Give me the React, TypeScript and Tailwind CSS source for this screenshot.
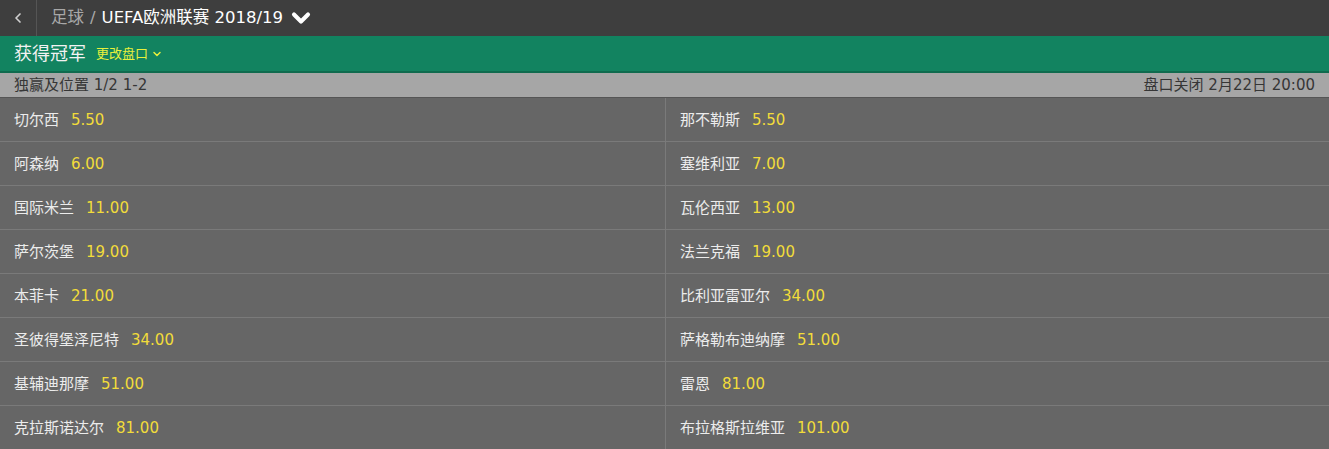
import { ChevronLeft, ChevronDown } from "lucide-react"

const rows: [string, string, string, string][] = [
  ["切尔西", "5.50", "那不勒斯", "5.50"],
  ["阿森纳", "6.00", "塞维利亚", "7.00"],
  ["国际米兰", "11.00", "瓦伦西亚", "13.00"],
  ["萨尔茨堡", "19.00", "法兰克福", "19.00"],
  ["本菲卡", "21.00", "比利亚雷亚尔", "34.00"],
  ["圣彼得堡泽尼特", "34.00", "萨格勒布迪纳摩", "51.00"],
  ["基辅迪那摩", "51.00", "雷恩", "81.00"],
  ["克拉斯诺达尔", "81.00", "布拉格斯拉维亚", "101.00"],
]

function Cell({ name, odds, right }: { name: string; odds: string; right?: boolean }) {
  return (
    <div
      className={
        "flex items-center gap-[12px] h-[44px] pl-[14px] pt-[2px] border-b border-[#7a7a7a] " +
        (right ? "border-l border-l-[#7a7a7a]" : "")
      }
    >
      <span className="text-[#ececec]">{name}</span>
      <span className="text-[#f2dc3a]">{odds}</span>
    </div>
  )
}

export default function App() {
  return (
    <div
      className="w-[1329px] h-[449px] overflow-hidden bg-[#666666] text-[15px]"
      style={{ fontFamily: '"DejaVu Sans", "Noto Sans CJK SC", sans-serif' }}
    >
      <div className="flex items-center h-[36px] bg-[#3e3e3e]">
        <div className="flex items-center justify-center w-[37px] h-full border-r border-[#555555] text-[#d0d0d0]">
          <ChevronLeft className="w-4 h-4" strokeWidth={2.5} />
        </div>
        <div className="flex items-center pl-[14px] text-[16.5px]">
          <span className="text-[#a8a8a8]">足球</span>
          <span className="text-[#a8a8a8] mx-[6px]">/</span>
          <span className="text-white">UEFA欧洲联赛 2018/19</span>
          <ChevronDown className="w-7 h-7 ml-[4px] text-white" strokeWidth={3.5} />
        </div>
      </div>
      <div className="flex items-center h-[37px] bg-[#128360] border-b-2 border-[#0f6b4e] pl-[14px]">
        <span className="text-[18px] text-[#f2f2f2]">获得冠军</span>
        <span className="ml-[10px] text-[13px] text-[#e8f03c]">更改盘口</span>
        <ChevronDown className="w-3 h-3 ml-[3px] text-[#e8f03c]" strokeWidth={3} />
      </div>
      <div className="flex items-center justify-between h-[25px] bg-[#a6a6a6] px-[14px] text-[15px] text-[#363636] border-b border-[#555555]">
        <span>独赢及位置 1/2 1-2</span>
        <span>盘口关闭 2月22日 20:00</span>
      </div>
      <div className="grid grid-cols-[665px_1fr]">
        {rows.map((r, i) => (
          <div key={i} className="contents">
            <Cell name={r[0]} odds={r[1]} />
            <Cell name={r[2]} odds={r[3]} right />
          </div>
        ))}
      </div>
    </div>
  )
}
